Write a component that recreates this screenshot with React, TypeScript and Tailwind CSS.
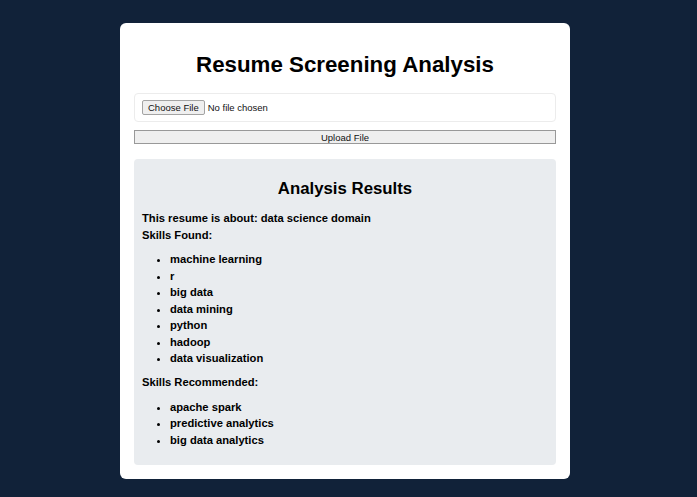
import React from 'react';

const skillsFound = ['machine learning', 'r', 'big data', 'data mining', 'python', 'hadoop', 'data visualization'];
const skillsRecommended = ['apache spark', 'predictive analytics', 'big data analytics'];

const App: React.FC = () => {
  return (
    <div className="min-h-screen bg-[#112239] pt-[23px] pb-[19px] font-['Liberation_Sans',Arial,sans-serif] text-black">
      <div className="w-[450px] ml-[120px] bg-white rounded-[6px] px-[14px] pt-[29px] pb-[14px]">
        <h1 className="text-center text-[22.3px] leading-[26px] font-bold mb-[15px]">Resume Screening Analysis</h1>

        {/* Upload form */}
        <div className="h-[29px] flex items-center border border-[#ececec] rounded-[4px] px-[7px]">
          <input
            type="file"
            className="text-[9.5px] leading-[11px] text-[#111] file:mr-[3px] file:px-[5px] file:py-[1px] file:border file:border-[#a3a3a3] file:bg-[#efefef] file:rounded-[2px] file:text-[#111]"
          />
        </div>
        <button className="mt-[8px] w-full h-[14px] flex items-center justify-center border border-[#999] bg-[#efefef] text-[9.5px] leading-[11px] text-[#111]">
          Upload File
        </button>

        {/* Results */}
        <div className="mt-[15px] bg-[#e9ecef] rounded-[4px] px-[8px] pt-[20px] pb-[16.5px] text-[11.2px] leading-[16.5px] font-bold">
          <h2 className="text-center text-[16.8px] leading-[20px] font-bold mb-[11px]">Analysis Results</h2>
          <p>This resume is about: data science domain</p>
          <p>Skills Found:</p>
          <ul className="list-disc pl-[28px] mt-[8px]">
            {skillsFound.map((s) => (
              <li key={s}>{s}</li>
            ))}
          </ul>
          <p className="mt-[7.5px]">Skills Recommended:</p>
          <ul className="list-disc pl-[28px] mt-[8px]">
            {skillsRecommended.map((s) => (
              <li key={s}>{s}</li>
            ))}
          </ul>
        </div>
      </div>
    </div>
  );
};

export default App;
